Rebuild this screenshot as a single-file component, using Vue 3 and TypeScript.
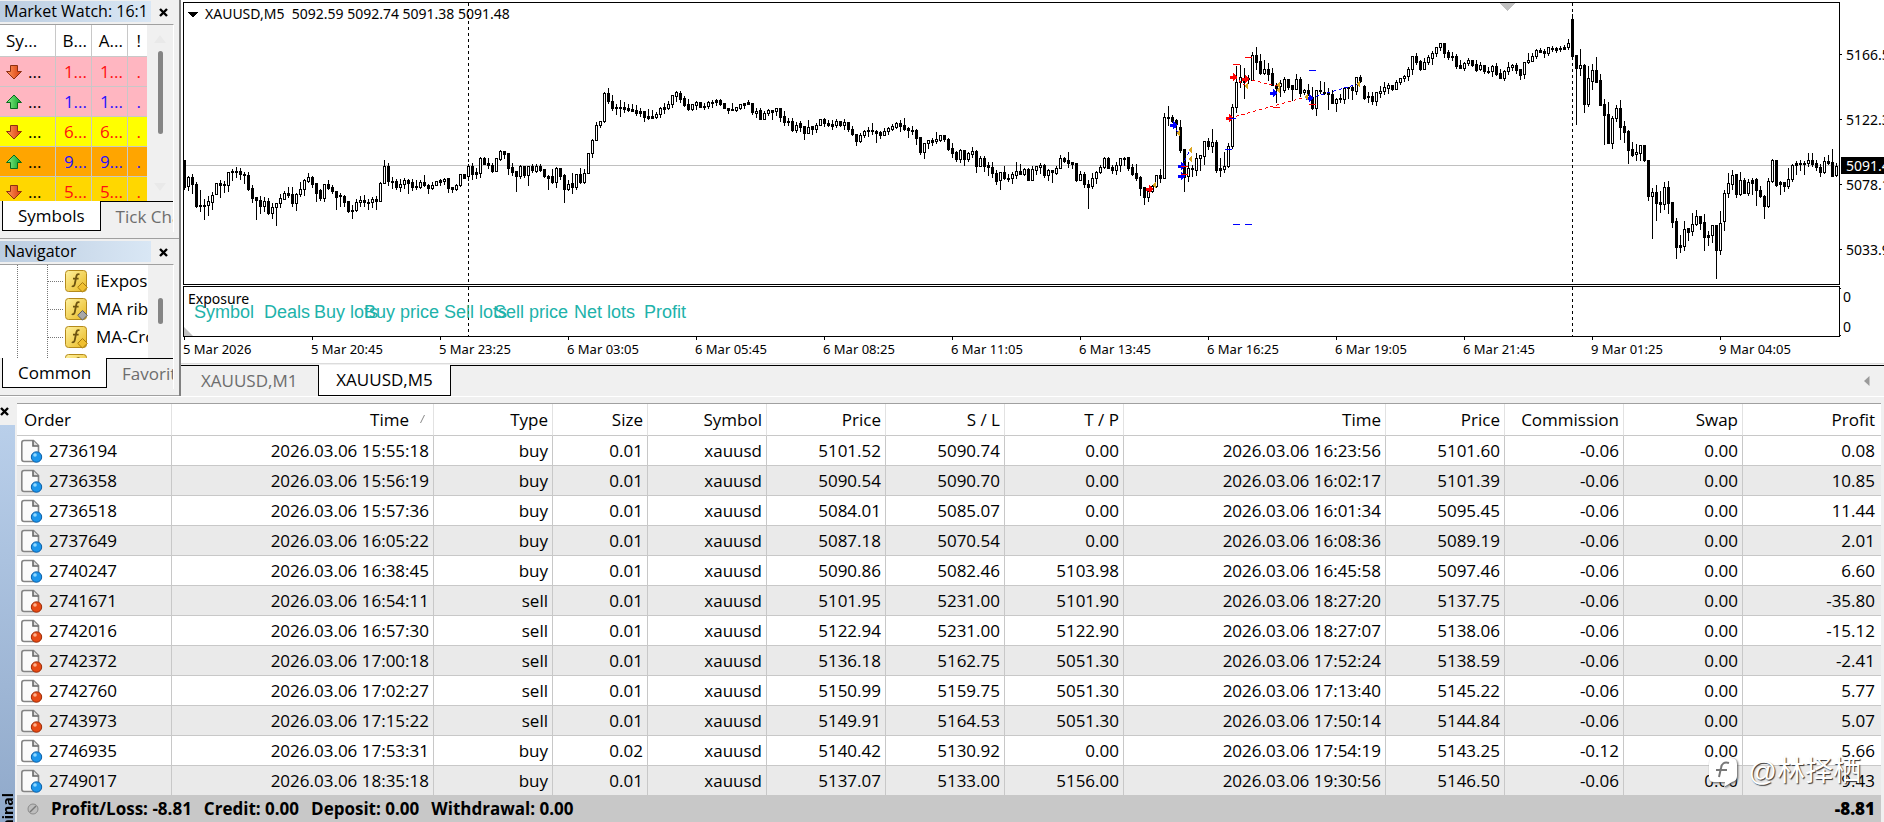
<script setup lang="ts">
interface Candle {
  x: number
  up: boolean
  high: number
  top: number
  bottom: number
  low: number
}

// One entry per five-minute bar: direction, then high, body top, body bottom and low.
const bars = `
d160,160,187,189 u176,177,186,190 d174,177,184,193 d182,184,206,207 d190,205,206,211 d199,205,206,219
u196,201,205,215 u192,195,202,209 u183,183,194,194 d180,183,185,197 d181,184,185,192 u172,172,185,191
d169,171,172,180 d167,171,172,177 d168,171,174,179 d172,174,175,183 d172,175,189,190 d185,188,198,202
d197,197,200,219 d196,200,206,213 u197,201,206,211 d198,201,213,214 u203,207,213,218 u203,203,207,225
u194,198,203,207 u191,193,199,199 d187,193,195,197 d187,194,203,206 u193,194,203,210 u182,189,194,196
u179,180,189,195 u173,177,181,182 d176,177,184,187 d183,183,193,201 d189,190,198,200 u184,184,198,201
d180,184,188,189 d185,187,191,193 d191,191,197,209 d193,195,196,206 d195,196,202,206 d201,201,211,212
d205,210,211,218 u199,202,210,211 u196,200,202,206 d195,200,202,206 d199,202,203,209 u197,199,202,207
d196,199,201,209 u182,183,201,201 u160,166,183,183 d163,166,181,185 d177,181,182,188 d179,181,187,189
u179,184,187,191 u178,180,184,188 d179,180,183,193 d179,182,187,190 d180,186,187,189 u180,182,187,188
d175,182,185,186 d184,185,188,193 u182,185,188,189 u181,181,185,185 d179,180,182,185 u178,179,181,184
d178,178,188,192 d187,187,189,192 u184,185,189,190 u174,174,185,186 d174,174,178,178 u164,166,176,180
d163,166,174,179 d168,172,174,178 u157,158,173,177 d157,158,164,164 d158,163,165,168 d163,165,171,172
u158,158,171,171 u150,151,159,160 d151,151,154,158 d153,153,168,174 d163,167,172,175 d171,171,176,191
u165,166,176,178 d166,166,175,177 u166,166,175,185 d164,166,170,172 u164,166,171,172 d164,166,170,171
d169,169,176,177 d175,176,178,189 d169,176,182,183 u167,168,182,187 d168,168,176,179 d174,175,189,202
u180,184,189,190 d173,183,187,193 u174,174,187,189 d168,174,182,183 u169,173,182,183 u153,153,173,173
u139,140,153,157 u122,125,140,140 u121,121,125,127 u92,93,121,122 d88,93,101,103 d95,101,108,110
d104,107,108,114 d100,107,108,116 d102,107,109,112 d104,108,110,111 d104,109,111,111 d105,110,113,115
d108,111,113,116 d111,111,117,121 d109,116,118,119 d110,116,118,118 u112,114,117,118 u107,108,114,117
d103,107,109,113 u101,104,108,109 u95,95,104,107 u91,92,96,101 d91,93,99,102 d96,98,105,106
d99,104,109,110 u104,104,109,110 u101,102,105,109 d102,102,107,107 d103,106,107,109 u101,102,106,108
d100,102,103,107 d99,100,102,105 d99,100,104,105 d103,103,108,108 d108,108,110,113 d103,109,110,110
u107,107,110,111 u104,104,108,109 d103,103,105,108 d100,102,104,104 d103,103,112,114 u108,111,113,117
d108,110,119,119 u111,113,119,119 u109,110,113,115 d110,110,112,119 u108,108,111,115 d108,108,117,121
d111,116,122,125 d118,121,122,125 d118,121,130,131 u122,125,130,132 d121,123,127,131 d126,126,133,139
u120,127,133,133 d126,126,129,134 u123,125,129,132 u119,119,125,125 d118,119,123,126 d120,123,125,126
d120,124,126,129 u119,121,125,127 d121,121,125,126 u119,122,125,129 d122,122,129,131 d126,129,134,135
d134,134,141,145 u133,135,141,142 u130,131,135,137 d127,130,131,136 d123,130,131,134 d130,131,133,142
d131,132,135,138 u128,131,135,135 u127,128,131,134 u124,126,129,130 u122,123,127,128 d120,123,126,131
d118,125,129,130 d127,128,130,137 d126,130,131,134 d129,130,138,144 d137,137,152,154 u143,143,152,158
u140,140,143,148 d138,140,142,145 u132,139,141,143 u135,135,140,141 d135,135,139,141 d138,139,149,150
d143,148,153,157 d151,152,159,161 u149,150,159,162 d150,150,159,165 u152,153,159,161 u147,151,154,157
d150,151,166,172 u156,158,166,166 d156,158,166,171 d162,165,167,175 d162,167,173,177 d170,173,181,184
u172,172,180,189 d166,172,178,179 d174,178,179,181 u172,174,178,183 u162,171,175,178 d164,171,174,174
u168,169,174,175 d168,169,180,180 u166,169,180,180 u166,166,170,174 u163,165,167,173 d164,165,175,177
u169,170,175,180 d170,170,172,182 u166,168,173,174 u155,158,168,168 d157,158,161,162 d152,160,163,167
d162,162,164,168 d163,163,180,181 u171,174,180,180 d172,174,184,187 d180,184,187,208 u173,178,186,188
u171,172,178,183 u165,167,172,173 u157,158,167,168 d157,158,168,168 d165,167,170,173 u162,165,170,174
u158,158,165,171 d157,158,159,165 d157,157,168,170 d164,167,174,175 d164,173,178,180 d176,177,188,195
d187,187,197,204 u191,191,197,201 u185,186,191,192 u175,175,186,187 d169,175,178,182 u113,117,178,178
d106,117,118,125 d115,117,121,122 d119,120,124,135 d120,127,150,152 d149,149,177,191 u162,168,176,181
d165,168,169,176 u153,158,170,175 u155,155,158,170 u141,141,156,164 d138,141,146,149 u129,142,146,152
d140,142,170,172 d158,168,170,176 u152,166,169,172 u143,146,166,167 u104,107,146,148 u66,82,107,112
u65,77,82,87 d68,78,82,98 d75,78,79,83 u52,55,80,80 d47,55,62,69 d54,61,73,74
u60,69,73,74 d63,69,74,80 d68,73,85,85 d83,86,88,102 u80,83,86,96 u77,79,90,92
d79,79,87,89 d85,85,89,100 u74,79,89,89 d77,79,93,96 u89,90,92,94 d84,90,94,95
d87,97,108,109 u90,90,108,115 d81,90,91,93 d82,92,93,94 d88,93,94,109 d90,94,103,103
u98,99,103,111 d94,98,99,102 u87,88,99,103 d87,87,88,98 d86,87,90,99 u77,77,91,94
d75,77,81,82 d85,86,98,99 d92,96,97,102 d92,96,101,104 u92,92,101,105 u86,91,93,97
u82,87,91,94 u83,85,88,93 d85,85,89,90 u80,82,89,89 u78,78,82,84 u75,76,78,81
u67,69,76,80 u56,56,69,74 d53,56,62,64 d60,61,69,70 u58,62,69,69 u55,57,62,64
u51,53,58,64 u47,47,53,56 u43,43,47,50 d43,43,53,57 d50,52,57,59 d52,56,57,60
d54,56,66,68 d60,65,68,68 u62,63,68,70 u58,60,63,65 d60,60,65,66 d60,64,70,71
u62,65,69,70 d65,65,71,73 d67,71,72,73 u65,66,71,76 d63,66,74,75 d69,73,78,78
u70,71,78,80 u62,67,71,74 u64,65,67,70 d63,65,70,73 d69,69,75,79 u62,62,74,78
u53,60,62,63 u53,56,61,61 u49,50,56,58 d48,50,52,52 d49,51,53,57 u47,47,53,55
d46,48,49,51 d47,48,50,52 d46,48,49,51 d45,47,49,49 u39,43,47,49 d14,19,56,58
d55,55,68,124 u49,65,68,75 d64,65,104,112 u66,78,104,106 u64,70,81,89 d57,70,82,82
d74,80,105,105 d99,104,115,144 d102,114,143,143 u116,118,143,148 u105,108,118,121 d100,108,127,139
d121,126,132,142 d130,131,150,163 d142,149,155,156 u144,152,154,160 u145,145,153,160 d145,145,160,161
d160,160,196,200 u188,192,196,238 d185,192,203,220 d191,202,204,212 u182,187,204,209 d181,187,203,213
d202,202,222,227 d218,221,247,258 d235,245,247,252 u221,229,246,250 d228,228,232,240 u213,224,231,235
u210,216,224,225 d216,216,223,229 d214,222,237,250 d231,235,237,245 u225,225,235,242 d225,225,250,278
u211,223,250,254 u190,193,221,230 u173,183,193,197 u170,175,184,189 d174,174,194,197 u172,180,194,195
d178,180,193,193 u179,182,193,195 d178,180,183,194 d178,179,190,205 d186,190,196,197 d195,196,206,218
u178,181,206,207 u159,160,181,182 d160,160,185,186 d181,182,184,194 d182,182,186,191 u168,179,186,188
u164,165,179,181 d161,163,165,174 d160,163,164,170 d161,163,164,174 u153,160,163,166 d153,160,164,166
d160,163,167,170 d164,167,172,176 u157,161,172,173 d155,161,163,164 d149,162,176,176 u163,166,175,176`

const candles: Candle[] = bars
  .trim()
  .split(/\s+/)
  .map((bar, i) => {
    const [high, top, bottom, low] = bar.slice(1).split(',').map(Number)
    return { x: i * 4, up: bar[0] === 'u', high, top, bottom, low }
  })

const quote = 'XAUUSD,M5  5092.59 5092.74 5091.38 5091.48'

type Mark = { x: number; y: number; color: string }
const red = '#ff0000'
const blue = '#0000ff'

const entries: Mark[] = [
  { x: 966, y: 189, color: red },
  { x: 990, y: 125, color: blue },
  { x: 998, y: 166, color: blue },
  { x: 998, y: 176, color: blue },
  { x: 1046, y: 118, color: red },
  { x: 1050, y: 77, color: red },
  { x: 1062, y: 79, color: red },
  { x: 1090, y: 93, color: blue },
  { x: 1126, y: 98, color: blue },
]

const exits: { x: number; y: number }[] = [
  { x: 970, y: 185 },
  { x: 994, y: 133 },
  { x: 1006, y: 150 },
  { x: 1006, y: 159 },
  { x: 1062, y: 86 },
  { x: 1094, y: 85 },
  { x: 1094, y: 90 },
  { x: 1122, y: 97 },
  { x: 1174, y: 84 },
]

const levels: Mark[] = [
  { x: 1049, y: 64, color: red },
  { x: 1061, y: 57, color: red },
  { x: 1089, y: 107, color: red },
  { x: 1125, y: 104, color: red },
  { x: 1125, y: 70, color: blue },
  { x: 1049, y: 224, color: blue },
  { x: 1061, y: 224, color: blue },
  { x: 1041, y: 149, color: blue },
  { x: 1045, y: 118, color: blue },
  { x: 997, y: 166, color: red },
  { x: 997, y: 174, color: red },
]

const trades = [
  { from: [1062, 79], to: [1094, 86], color: red },
  { from: [1046, 118], to: [1122, 97], color: red },
  { from: [1050, 77], to: [1062, 86], color: red },
  { from: [1126, 98], to: [1174, 84], color: blue },
  { from: [990, 125], to: [994, 133], color: blue },
  { from: [998, 166], to: [1006, 150], color: blue },
]

const prices = [
  { y: 54, text: '5166.57' },
  { y: 119, text: '5122.37' },
  { y: 184, text: '5078.17' },
  { y: 249, text: '5033.97' },
]

const dates = [
  '5 Mar 2026', '5 Mar 20:45', '5 Mar 23:25', '6 Mar 03:05', '6 Mar 05:45', '6 Mar 08:25', '6 Mar 11:05',
  '6 Mar 13:45', '6 Mar 16:25', '6 Mar 19:05', '6 Mar 21:45', '9 Mar 01:25', '9 Mar 04:05',
]

const exposure = [
  { x: 10, text: 'Symbol' },
  { x: 80, text: 'Deals' },
  { x: 130, text: 'Buy lots' },
  { x: 180, text: 'Buy price' },
  { x: 260, text: 'Sell lots' },
  { x: 310, text: 'Sell price' },
  { x: 390, text: 'Net lots' },
  { x: 460, text: 'Profit' },
]

const watch = [
  { dir: 'down', tone: 'pink', digit: '1' },
  { dir: 'up', tone: 'pink', digit: '1' },
  { dir: 'down', tone: 'yellow', digit: '6' },
  { dir: 'up', tone: 'orange', digit: '9' },
  { dir: 'down', tone: 'gold', digit: '5' },
]

const indicators = [
  { name: 'iExposure', gem: '#f0c030', edge: '#a87c10' },
  { name: 'MA ribbon', gem: '#a8a8a8', edge: '#606060' },
  { name: 'MA-Cross', gem: '#f0c030', edge: '#a87c10' },
  { name: 'MACD', gem: '#f0c030', edge: '#a87c10' },
]

const totals = ['Profit/Loss: -8.81', 'Credit: 0.00', 'Deposit: 0.00', 'Withdrawal: 0.00']

const columns = ['Order', 'Time', 'Type', 'Size', 'Symbol', 'Price', 'S / L', 'T / P', 'Time', 'Price', 'Commission', 'Swap', 'Profit']

const day = '2026.03.06 '
const orders = [
  ['2736194', '15:55:18', 'buy', '0.01', '5101.52', '5090.74', '0.00', '16:23:56', '5101.60', '-0.06', '0.08'],
  ['2736358', '15:56:19', 'buy', '0.01', '5090.54', '5090.70', '0.00', '16:02:17', '5101.39', '-0.06', '10.85'],
  ['2736518', '15:57:36', 'buy', '0.01', '5084.01', '5085.07', '0.00', '16:01:34', '5095.45', '-0.06', '11.44'],
  ['2737649', '16:05:22', 'buy', '0.01', '5087.18', '5070.54', '0.00', '16:08:36', '5089.19', '-0.06', '2.01'],
  ['2740247', '16:38:45', 'buy', '0.01', '5090.86', '5082.46', '5103.98', '16:45:58', '5097.46', '-0.06', '6.60'],
  ['2741671', '16:54:11', 'sell', '0.01', '5101.95', '5231.00', '5101.90', '18:27:20', '5137.75', '-0.06', '-35.80'],
  ['2742016', '16:57:30', 'sell', '0.01', '5122.94', '5231.00', '5122.90', '18:27:07', '5138.06', '-0.06', '-15.12'],
  ['2742372', '17:00:18', 'sell', '0.01', '5136.18', '5162.75', '5051.30', '17:52:24', '5138.59', '-0.06', '-2.41'],
  ['2742760', '17:02:27', 'sell', '0.01', '5150.99', '5159.75', '5051.30', '17:13:40', '5145.22', '-0.06', '5.77'],
  ['2743973', '17:15:22', 'sell', '0.01', '5149.91', '5164.53', '5051.30', '17:50:14', '5144.84', '-0.06', '5.07'],
  ['2746935', '17:53:31', 'buy', '0.02', '5140.42', '5130.92', '0.00', '17:54:19', '5143.25', '-0.12', '5.66'],
  ['2749017', '18:35:18', 'buy', '0.01', '5137.07', '5133.00', '5156.00', '19:30:56', '5146.50', '-0.06', '9.43'],
].map(([id, opened, type, size, price, sl, tp, closed, closePrice, commission, profit]) => ({
  id,
  type,
  cells: [day + opened, type, size, 'xauusd', price, sl, tp, day + closed, closePrice, commission, '0.00', profit],
}))
</script>

<template>
  <main class="app">
    <div class="upper">
      <aside class="side">
        <section class="panel watch">
          <header class="title">
            <h2>Market Watch: 16:1</h2>
            <button type="button" aria-label="Close Market Watch">
              <svg width="9" height="9" viewBox="0 0 9 9"><path d="M1 1L8 8M8 1L1 8" stroke="#000" stroke-width="2.4" /></svg>
            </button>
          </header>
          <div class="body watch-body">
            <table class="symbols">
              <thead>
                <tr><th>Sy...</th><th>B...</th><th>A...</th><th>!</th></tr>
              </thead>
              <tbody>
                <tr v-for="(row, i) in watch" :key="i" :class="[row.tone, row.dir]">
                  <td>
                    <svg width="16" height="16" viewBox="0 0 16 16">
                      <defs>
                        <linearGradient :id="'arrow' + i" x1="0" x2="1">
                          <stop offset="0" :stop-color="row.dir === 'up' ? '#8df08d' : '#ff9a60'" />
                          <stop offset="1" :stop-color="row.dir === 'up' ? '#08a020' : '#d83808'" />
                        </linearGradient>
                      </defs>
                      <path
                        :d="row.dir === 'up' ? 'M8 1L15.500 8.500H11.500V14.500H4.500V8.500H0.500Z' : 'M8 15L15.500 7.500H11.500V1.500H4.500V7.500H0.500Z'"
                        :fill="`url(#arrow${i})`"
                        :stroke="row.dir === 'up' ? '#0a6a1c' : '#8c3010'"
                        stroke-linejoin="round"
                      />
                    </svg>
                    <span>...</span>
                  </td>
                  <td>{{ row.digit }}...</td>
                  <td>{{ row.digit }}...</td>
                  <td>.</td>
                </tr>
              </tbody>
            </table>
            <div class="scroll">
              <svg width="12" height="8" viewBox="0 0 12 8"><path d="M0 8L6 0L12 8Z" fill="#e9e9e9" /></svg>
              <i class="thumb long"></i>
              <svg class="end" width="12" height="8" viewBox="0 0 12 8"><path d="M0 0L6 8L12 0Z" fill="#e9e9e9" /></svg>
            </div>
          </div>
          <nav class="tabs">
            <button type="button" class="on">Symbols</button>
            <button type="button">Tick Chart</button>
          </nav>
        </section>

        <section class="panel navigator">
          <header class="title">
            <h2>Navigator</h2>
            <button type="button" aria-label="Close Navigator">
              <svg width="9" height="9" viewBox="0 0 9 9"><path d="M1 1L8 8M8 1L1 8" stroke="#000" stroke-width="2.4" /></svg>
            </button>
          </header>
          <div class="body tree-body">
            <ul class="tree">
              <li v-for="(item, i) in indicators" :key="item.name">
                <svg width="23" height="23" viewBox="0 0 23 23">
                  <defs>
                    <linearGradient :id="'fx' + i" x1="0" y1="0" x2="1" y2="1">
                      <stop offset="0" stop-color="#fff2a0" />
                      <stop offset="1" stop-color="#e8b820" />
                    </linearGradient>
                  </defs>
                  <rect x="0.5" y="0.5" width="21" height="21" rx="3" :fill="`url(#fx${i})`" stroke="#b48a1c" />
                  <path d="M14.5 4.5C12.5 3.4 11.6 4.8 11.2 7L9.8 14C9.4 16 8.4 16.8 6.8 16M8 8.6H13.6" fill="none" stroke="#6e5410" stroke-width="1.8" />
                  <path d="M17.5 12.5L22.3 17.3L17.5 22.1L12.7 17.3Z" :fill="item.gem" :stroke="item.edge" />
                </svg>
                <span>{{ item.name }}</span>
              </li>
            </ul>
            <div class="scroll"><i class="thumb short"></i></div>
          </div>
          <nav class="tabs">
            <button type="button" class="on">Common</button>
            <button type="button">Favorites</button>
          </nav>
        </section>
      </aside>

      <section class="charts">
        <div class="chart">
          <div class="plots">
            <svg class="pane price">
              <g transform="translate(0,-3)" shape-rendering="crispEdges">
                <rect x="0" y="165" width="100%" height="1" fill="#c0c0c0" />
                <path d="M1315 3H1331L1323 11Z" fill="#c0c0c0" />
                <path d="M284.5 3V285M1388.5 3V285" stroke="#000" stroke-dasharray="3 3" />
                <template v-for="c in candles" :key="c.x">
                  <rect :x="c.x" :y="c.high" width="1" :height="c.low - c.high + 1" />
                  <rect :x="c.x - 1" :y="c.top" width="3" :height="c.bottom - c.top + 1" />
                  <rect v-if="c.up && c.bottom - c.top > 1" :x="c.x" :y="c.top + 1" width="1" :height="c.bottom - c.top - 1" fill="#fff" />
                </template>
                <line
                  v-for="(t, i) in trades" :key="'t' + i"
                  :x1="t.from[0]" :y1="t.from[1]" :x2="t.to[0]" :y2="t.to[1]" :stroke="t.color" stroke-dasharray="3 3"
                />
                <path v-for="(m, i) in entries" :key="'e' + i" :d="`M${m.x - 4} ${m.y - 1}h3v-3l4 4l-4 4v-3h-3z`" :fill="m.color" :stroke="m.color" />
                <path v-for="(m, i) in exits" :key="'x' + i" :d="`M${m.x - 2} ${m.y}l4 -4v8z`" fill="#daa520" />
                <rect v-for="(m, i) in levels" :key="'l' + i" :x="m.x" :y="m.y" width="7" height="1" :fill="m.color" />
                <path d="M3 12H14L8.500 17.500Z" />
              </g>
              <text class="quote" x="21" y="16">{{ quote }}</text>
            </svg>
            <svg class="pane sub">
              <path d="M284.5 0V50M1388.5 0V50" stroke="#000" stroke-dasharray="3 3" shape-rendering="crispEdges" />
              <path d="M0 40L9 49H0Z" fill="#c0c0c0" />
              <text x="4" y="17">Exposure</text>
              <text v-for="e in exposure" :key="e.text" class="teal" :x="e.x" y="31">{{ e.text }}</text>
            </svg>
          </div>
          <svg class="scale">
            <g v-for="p in prices" :key="p.y">
              <rect x="0" :y="p.y" width="2" height="1" />
              <text x="6" :y="p.y + 6">{{ p.text }}</text>
            </g>
            <rect x="1" y="157" width="60" height="17" />
            <text x="6" y="171" fill="#fff">5091.48</text>
            <rect x="0" y="288" width="1" height="1" />
            <rect x="0" y="335" width="1" height="1" />
            <text x="3" y="302">0</text>
            <text x="3" y="332">0</text>
          </svg>
        </div>
        <svg class="dates">
          <g v-for="(d, i) in dates" :key="d">
            <rect :x="3 + i * 128" y="0" width="1" height="3" />
            <text :x="2 + i * 128" y="17">{{ d }}</text>
          </g>
        </svg>
        <nav class="chart-tabs">
          <button type="button">XAUUSD,M1</button>
          <button type="button" class="on">XAUUSD,M5</button>
          <button type="button" class="more" aria-label="Scroll tabs">
            <svg width="6" height="10" viewBox="0 0 6 10"><path d="M5.500 0V10L0 5Z" fill="#9a9a9a" /></svg>
          </button>
        </nav>
      </section>
    </div>

    <section class="terminal">
      <div class="rail">
        <button type="button" aria-label="Close Terminal">
          <svg width="9" height="9" viewBox="0 0 9 9"><path d="M1 1L8 8M8 1L1 8" stroke="#000" stroke-width="2.4" /></svg>
        </button>
        <div class="strip"><div class="clip"><span>Terminal</span></div></div>
      </div>
      <div class="history">
        <table class="orders">
          <colgroup>
            <col class="w-id"><col class="w-time"><col><col class="w-size"><col><col><col><col>
            <col class="w-time"><col><col><col><col class="w-last">
          </colgroup>
          <thead>
            <tr>
              <th v-for="(c, i) in columns" :key="i">
                {{ c }}<svg v-if="i === 1" class="sort" width="5" height="8" viewBox="0 0 5 8"><path d="M4.500 0L0.500 8" stroke="#888" /></svg>
              </th>
            </tr>
          </thead>
          <tbody>
            <tr v-for="o in orders" :key="o.id">
              <td>
                <svg width="22" height="24" viewBox="0 0 22 24">
                  <path d="M3 1.500H12.500L17.500 6.500V20Q17.500 22.500 15 22.500H3Q0.800 22.500 0.800 20V4Q0.800 1.500 3 1.500Z" fill="#fbfbfb" stroke="#858585" stroke-width="1.6" />
                  <path d="M12 1.500V7H17.500" fill="#ddd" stroke="#666" stroke-width="1.6" />
                  <circle cx="15.500" cy="18" r="5.200" :fill="o.type === 'buy' ? '#1c97ec' : '#e84a14'" :stroke="o.type === 'buy' ? '#0b5fa8' : '#9c2c08'" />
                  <circle cx="14" cy="16" r="1.800" :fill="o.type === 'buy' ? '#8fd8ff' : '#ffae88'" />
                </svg>
                <span>{{ o.id }}</span>
              </td>
              <td v-for="(cell, i) in o.cells" :key="i">{{ cell }}</td>
            </tr>
          </tbody>
        </table>
        <footer class="summary">
          <svg width="12" height="12" viewBox="0 0 12 12">
            <circle cx="6" cy="6" r="5" fill="#bdbdbd" stroke="#8a8a8a" /><path d="M3 9L9 3" stroke="#777" stroke-width="1.500" />
          </svg>
          <span v-for="t in totals" :key="t">{{ t }}</span>
          <b>-8.81</b>
        </footer>
        <div class="mark">
          <svg width="32" height="32" viewBox="0 0 32 32">
            <path d="M6 2H23Q29 2 29 8V20Q29 25 24 26L16 31L17 26H6Q1 26 1 21V8Q1 2 6 2Z" fill="#fff" />
            <path d="M21 7Q14 5 13 12L11 21M8 14H19" fill="none" stroke="#777" stroke-width="2" />
          </svg>
          <span>@林择栖</span>
        </div>
      </div>
    </section>
  </main>
</template>

<style>
body {
  margin: 0;
  background: #f0f0f0;
  overflow: hidden;
}
</style>

<style scoped>
.app {
  height: 100vh;
  display: flex;
  flex-direction: column;
  overflow: hidden;
  background: #f0f0f0;
  color: #000;
  font: 17px/22px "Open Sans", "Noto Sans", "Noto Sans CJK SC", sans-serif;
}
button {
  padding: 0;
  border: 0;
  background: none;
  color: inherit;
  font: inherit;
}
svg {
  display: block;
  flex: none;
}
.upper {
  display: flex;
  border-bottom: 1px solid #fff;
}
.side {
  box-sizing: border-box;
  width: 181px;
  flex: none;
  border-right: 2px solid #808080;
}
.panel {
  box-sizing: border-box;
  border-bottom: 1px solid #a0a0a0;
}
.watch {
  height: 239px;
  padding-top: 1px;
}
.navigator {
  height: 157px;
  padding-top: 2px;
}
.title {
  display: flex;
  align-items: flex-start;
  height: 23px;
  padding-right: 11px;
}
.title h2 {
  width: 147px;
  margin: 0;
  padding-left: 4px;
  background: linear-gradient(90deg, #bccde0, #d9e7f5);
  font: inherit;
  font-size: 16px;
  line-height: 21px;
  white-space: nowrap;
  overflow: hidden;
}
.title button {
  margin: 7px 0 0 auto;
}
.body {
  display: flex;
  width: 173px;
  border-top: 1px solid #a0a0a0;
  border-right: 1px solid #fff;
  overflow: hidden;
}
.watch-body {
  height: 176px;
}
.tree-body {
  height: 93px;
}
.symbols {
  table-layout: fixed;
  width: 147px;
  flex: none;
  align-self: flex-start;
  border-collapse: separate;
  border-spacing: 0;
  background: #fff;
}
.symbols th,
.symbols td {
  box-sizing: border-box;
  height: 30px;
  padding: 0 4px 0 0;
  border-right: 1px solid #c8c8c8;
  border-bottom: 1px solid #c8c8c8;
  font-weight: 400;
  line-height: 22px;
  text-align: right;
  white-space: nowrap;
}
.symbols th {
  height: 32px;
}
.symbols th:first-child {
  width: 56px;
  padding-left: 6px;
  text-align: left;
}
.symbols th:nth-child(2),
.symbols th:nth-child(3) {
  width: 36px;
}
.symbols th:last-child,
.symbols td:last-child {
  padding-right: 6px;
  border-right: 0;
}
.symbols td:first-child {
  color: #000;
  text-align: left;
}
.symbols td svg,
.symbols td span {
  display: inline-block;
  vertical-align: middle;
  margin-left: 6px;
}
.pink { background: #ffb6c1; }
.yellow { background: #ffff00; }
.orange { background: #ffa500; }
.gold { background: #ffd700; }
.up { color: #2a10ff; }
.down { color: #ff1010; }
.scroll {
  display: flex;
  flex-direction: column;
  align-items: center;
  flex: 1;
  padding: 10px 0;
  background: #f0f0f0;
}
.thumb {
  width: 5px;
  border-radius: 3px;
  background: #858585;
}
.long {
  height: 83px;
  margin-top: 8px;
}
.short {
  height: 26px;
  margin-top: 23px;
}
.end {
  margin-top: auto;
}
.tabs {
  display: flex;
  width: 173px;
  height: 31px;
  border-right: 1px solid #fff;
  overflow: hidden;
}
.tabs button {
  box-sizing: border-box;
  flex: none;
  height: 30px;
  padding: 0 15px;
  border-top: 1px solid #000;
  color: #6d6d6d;
  white-space: nowrap;
}
.tabs .on {
  margin-left: 2px;
  border: 1px solid #000;
  border-top: 0;
  background: #fff;
  color: #000;
}
.tree {
  width: 148px;
  flex: none;
  margin: 0;
  padding: 2px 0 0;
  list-style: none;
  background: repeating-linear-gradient(transparent 0 1px, #fff 1px 2px), linear-gradient(90deg, transparent 17px, #777 17px 18px, transparent 18px 47px, #777 47px 48px, transparent 48px) #fff;
  overflow: hidden;
}
.tree li {
  display: flex;
  align-items: center;
  gap: 8px;
  height: 28px;
  padding-left: 65px;
  background: repeating-linear-gradient(90deg, #777 0 1px, #fff 1px 2px) 48px 14px / 16px 1px no-repeat;
  white-space: nowrap;
}
.charts {
  flex: 1;
  min-width: 0;
  display: flex;
  flex-direction: column;
  background: #fff;
}
.chart {
  display: flex;
  padding: 2px 0 0 2px;
}
.plots {
  flex: 1;
  min-width: 0;
  display: flex;
  flex-direction: column;
  gap: 1px;
}
.pane {
  box-sizing: border-box;
  width: 100%;
  border: 1px solid #000;
  overflow: hidden;
}
.price { height: 283px; }
.sub { height: 51px; }
.scale {
  width: 44px;
  height: 337px;
  margin-top: -2px;
}
.pane text,
.scale text,
.dates text {
  font-family: "Noto Sans", sans-serif;
  font-size: 14px;
}
.dates text {
  font-size: 13px;
}
.pane .quote {
  white-space: pre;
}
.pane .teal {
  fill: #20b2aa;
  font-family: "Liberation Sans", Arial, sans-serif;
  font-size: 18px;
}
.dates {
  width: 100%;
  height: 26px;
  border-bottom: 1px solid #dcdcdc;
}
.chart-tabs {
  display: flex;
  height: 32px;
  background: linear-gradient(#000, #000) 0 1px / 100% 1px no-repeat #f0f0f0;
}
.chart-tabs button {
  box-sizing: border-box;
  height: 31px;
  margin-top: 1px;
  padding: 0 14px;
  color: #6d6d6d;
}
.chart-tabs button:first-child {
  width: 137px;
  padding-left: 20px;
  text-align: left;
}
.chart-tabs .on {
  width: 133px;
  border: 1px solid #000;
  border-top: 0;
  background: #fff;
  color: #000;
}
.chart-tabs .more {
  margin-left: auto;
}
.terminal {
  flex: 1;
  min-height: 0;
  display: flex;
  padding: 6px 3px 0 0;
}
.rail {
  display: flex;
  flex-direction: column;
  width: 17px;
  flex: none;
}
.rail button {
  height: 16px;
}
.strip {
  flex: 1;
  display: flex;
  flex-direction: column;
  justify-content: flex-end;
  width: 15px;
  margin-top: 6px;
  background: linear-gradient(#b9cfea, #90a9ca);
}
.clip {
  height: 29px;
  overflow: hidden;
}
.clip span {
  display: block;
  writing-mode: vertical-rl;
  transform: rotate(180deg);
  font: 700 14px/15px "Open Sans", sans-serif;
}
.history {
  position: relative;
  flex: 1;
  min-width: 0;
  display: flex;
  flex-direction: column;
  border-top: 1px solid #a0a0a0;
}
.orders {
  table-layout: fixed;
  width: 100%;
  border-collapse: separate;
  border-spacing: 0;
  background: #fff;
}
.orders col { width: 119px; }
.orders .w-id { width: 155px; }
.orders .w-time { width: 262px; }
.orders .w-size { width: 95px; }
.orders .w-last { width: auto; }
.orders th,
.orders td {
  box-sizing: border-box;
  height: 30px;
  padding: 0 4px 0 0;
  border-right: 1px solid #c8c8c8;
  border-bottom: 1px solid #c8c8c8;
  font-weight: 400;
  line-height: 22px;
  text-align: right;
  white-space: nowrap;
}
.orders th {
  height: 32px;
  border-right-color: #e2e2e2;
}
.orders th:first-child {
  padding-left: 7px;
  text-align: left;
}
.orders th:nth-child(2) {
  padding-right: 8px;
}
.sort {
  display: inline-block;
  margin-left: 11px;
  vertical-align: 3px;
}
.orders th:last-child,
.orders td:last-child {
  padding-right: 6px;
  border-right: 0;
}
.orders td:first-child {
  padding-left: 4px;
  text-align: left;
}
.orders td svg,
.orders td span {
  display: inline-block;
  vertical-align: middle;
}
.orders td span {
  margin-left: 6px;
}
.orders tbody tr:nth-child(even) {
  background: #eaeaea;
}
.summary {
  flex: 1;
  display: flex;
  align-items: center;
  gap: 12px;
  padding: 0 6px 0 10px;
  background: #c8c8c8;
  font-weight: 700;
  white-space: nowrap;
}
.summary b {
  margin-left: auto;
}
.mark {
  position: absolute;
  right: 20px;
  bottom: 30px;
  display: flex;
  align-items: center;
  gap: 9px;
  color: #fff;
  font: 28px/40px "Liberation Sans", "Noto Sans CJK SC", sans-serif;
  text-shadow: 1px 1px 1px #333;
}
.mark svg {
  filter: drop-shadow(1px 1px 1px #555);
}
</style>
